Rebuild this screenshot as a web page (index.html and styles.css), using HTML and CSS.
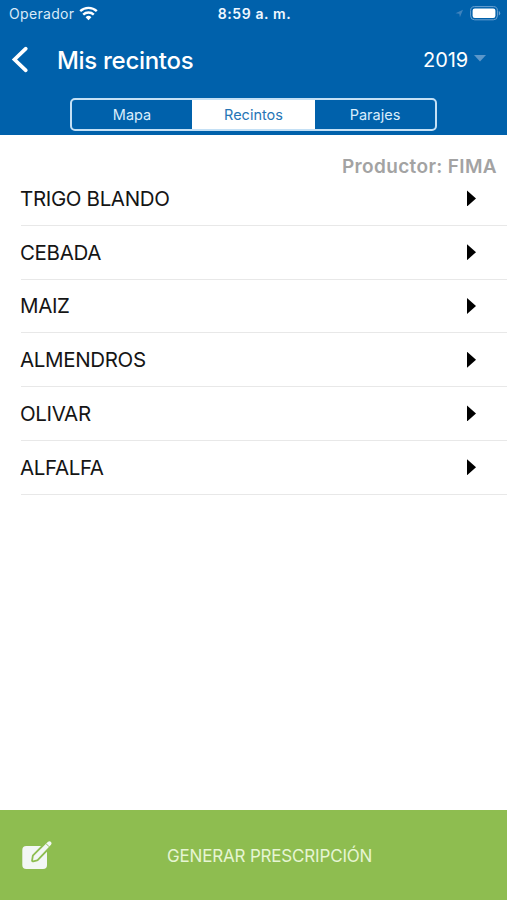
FILE: index.html
```html
<!DOCTYPE html>
<html lang="es">
<head>
<meta charset="utf-8">
<title>Mis recintos</title>
<link rel="stylesheet" href="styles.css">
</head>
<body>
<div class="app">
  <header class="header">
    <div class="status">
      <div class="carrier"><span class="carrier-name">Operador</span>
        <svg class="wifi" width="19" height="15" viewBox="0 0 19 15" fill="none" stroke="#fff" stroke-width="2.4"><path d="M1.2 5.2a12 12 0 0 1 16.6 0M4.2 8.6a7.7 7.700 0 0 1 10.6 0"/><path d="M9.5 14.2 6.6 11.2a4.2 4.200 0 0 1 5.800 0z" fill="#fff" stroke="none"/></svg>
      </div>
      <div class="clock">8:59 a. m.</div>
      <div class="indicators">
        <svg width="9" height="9" viewBox="0 0 9 9"><path d="M.5 4.200 8 .700 4.900 8.300 4.300 4.800z" fill="#3f83bd"/></svg>
        <svg width="31" height="15" viewBox="0 0 31 15"><rect x=".6" y=".6" width="26.8" height="13.2" rx="4" fill="none" stroke="#6ba2d2"/><rect x="2.600" y="2.500" width="22.800" height="9.400" rx="2.200" fill="#fff"/><path d="M28.800 5v4.600q1.400-.6 1.400-2.300T28.800 5z" fill="#6ba2d2"/></svg>
      </div>
    </div>
    <nav class="nav">
      <svg class="back" width="18" height="28" viewBox="0 0 18 28" fill="none" stroke="#fff" stroke-width="3.7" stroke-linecap="round"><path d="M14.800 2.700 3.500 13.500l11.300 10.800"/></svg>
      <h1 class="title">Mis recintos</h1>
      <div class="year"><span>2019</span><svg width="12" height="7" viewBox="0 0 12 7"><path d="M0 0h12L6 6.500z" fill="#5b97ca"/></svg></div>
    </nav>
    <div class="tabs">
      <div class="tab">Mapa</div>
      <div class="tab active">Recintos</div>
      <div class="tab">Parajes</div>
    </div>
  </header>
  <main class="content">
    <div class="producer">Productor: FIMA</div>
    <ul class="list">
      <li class="row"><span>TRIGO BLANDO</span><i class="arrow"></i></li>
      <li class="row"><span>CEBADA</span><i class="arrow"></i></li>
      <li class="row"><span>MAIZ</span><i class="arrow"></i></li>
      <li class="row"><span>ALMENDROS</span><i class="arrow"></i></li>
      <li class="row"><span>OLIVAR</span><i class="arrow"></i></li>
      <li class="row"><span>ALFALFA</span><i class="arrow"></i></li>
    </ul>
  </main>
  <footer class="footer">
    <svg class="edit" width="32" height="30" viewBox="0 0 32 30"><rect x="1.300" y="6" width="24.700" height="23" rx="4" fill="#f3f7f5"/><path d="M12 20.500 12.700 16 27 1.500q2-1.200 3.200.2t0 3L16 19.600z" fill="#f3f7f5" stroke="#8ebd50" stroke-width="3.600" stroke-linejoin="round"/><path d="M12 20.500 12.700 16 27 1.800q1.800-1.200 3 .2t0 2.700L16 19.600z" fill="#f3f7f5"/><path d="m25 3.600 3.100 3.100" stroke="#8ebd50" stroke-width="1"/></svg>
    <span class="action">GENERAR PRESCRIPCIÓN</span>
  </footer>
</div>
</body>
</html>
```
FILE: styles.css
```css
* { box-sizing: border-box; }
body { margin: 0; background: #fff; font-family: Inter, "Liberation Sans", sans-serif; }
.app { width: 507px; height: 900px; display: flex; flex-direction: column; overflow: hidden; }
.header { height: 135px; flex: none; background: #0061ab; color: #fff; }
.status { height: 28px; display: grid; grid-template-columns: 1fr auto 1fr; align-items: center; padding: 0 7px 0 9px; }
.carrier { display: flex; align-items: center; gap: 5px; color: #d9eaf8; font-size: 14px; letter-spacing: .32px; }
.carrier-name, .clock { margin-top: -1px; }
.wifi { margin-top: -2px; }
.clock { font-size: 14px; font-weight: 600; letter-spacing: .6px; color: #f0f8ff; }
.indicators { display: flex; align-items: center; justify-content: flex-end; gap: 6px; margin: -1px -1px 0 0; }
.nav { height: 64px; display: flex; align-items: center; padding: 0 21px 0 11px; }
.back { margin-top: -1px; }
.title { margin: 2px 0 0 28px; font-size: 24px; line-height: 30px; font-weight: 500; letter-spacing: -.3px; }
.year { margin-left: auto; display: flex; align-items: center; gap: 6px; font-size: 20px; letter-spacing: -.1px; }
.year svg { margin-top: -4px; }
.tabs { width: 367px; height: 33px; margin: 6px 0 0 70px; display: grid; grid-template-columns: 120px 123px 1fr; border: 2px solid #c4e0f5; border-radius: 5px; overflow: hidden; }
.tab { display: flex; align-items: center; justify-content: center; font-size: 14.5px; color: #d9edfc; }
.tab.active { background: #fff; color: #2675b6; }
.content { flex: 1; }
.producer { height: 37px; padding: 21px 10px 0; text-align: right; font-size: 19px; line-height: 22px; font-weight: 600; letter-spacing: .35px; color: #a3a3a3; }
.list { list-style: none; margin: 0; padding: 0 0 0 21px; }
.row { height: 53.75px; display: flex; align-items: center; justify-content: space-between; padding-right: 31px; border-bottom: 1px solid #e8e8e8; font-size: 20.5px; letter-spacing: -.35px; color: #151515; }
.row span { margin-left: -1px; }
.arrow { width: 9px; height: 16px; background: #000; clip-path: polygon(0 0, 100% 50%, 0 100%); }
.footer { height: 90px; flex: none; display: flex; align-items: center; background: #8ebd50; padding-left: 21px; }
.edit { margin-top: 0; }
.action { margin: 1px 0 0 114px; font-size: 17px; letter-spacing: -.18px; color: #e6f5d3; }
```
